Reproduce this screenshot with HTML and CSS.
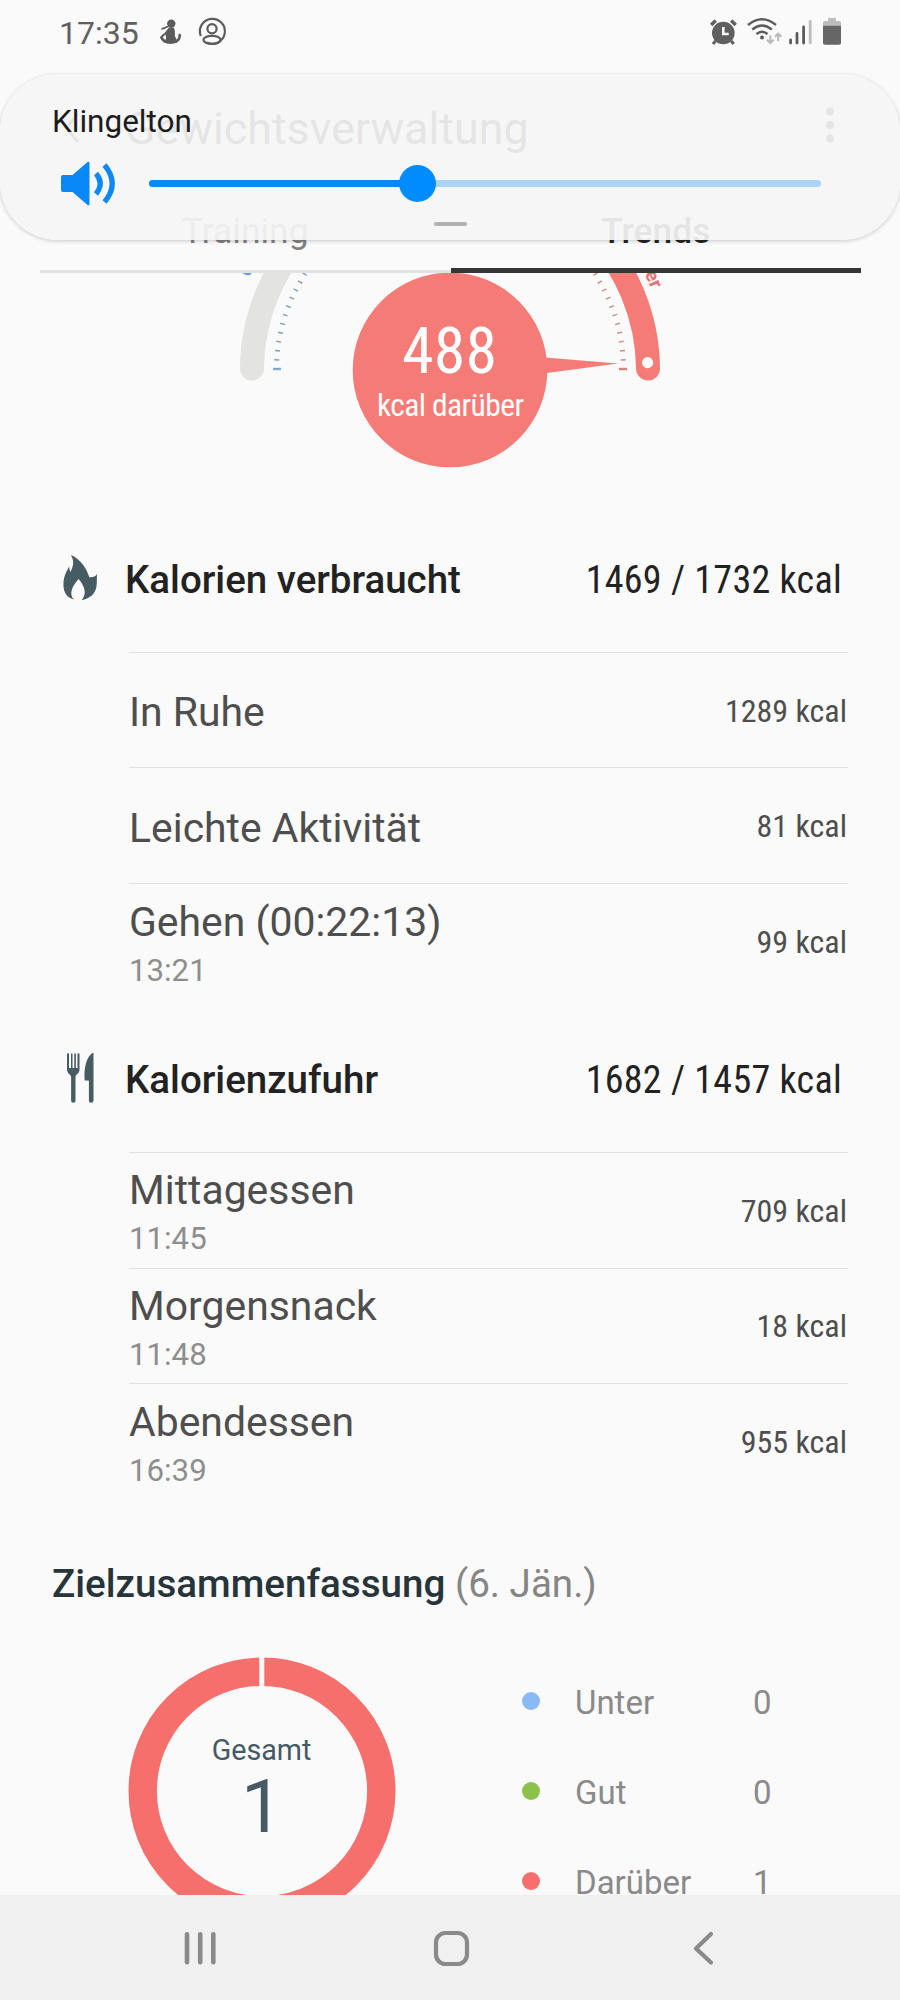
FILE: index.html
```html
<!DOCTYPE html>
<html lang="de">
<head>
<meta charset="utf-8">
<title>Gewichtsverwaltung</title>
<link rel="stylesheet" href="styles.css">
</head>
<body>
<div class="phone">
  <header class="status">
    <span class="clock">17:35</span>
    <svg class="status-left" viewBox="155 14 75 36" width="75" height="36">
      <g fill="#5c5c5c">
        <circle cx="171.3" cy="23.6" r="4.2"/>
        <path d="M168 26.5l-5.8 2.3" stroke="#5c5c5c" stroke-width="1.8" stroke-linecap="round"/>
        <path fill-rule="evenodd" d="M169 27.500h4.600c1.800 2.500 1.300 6 1.200 8.500 1 2.200 2.200 3.600 1.800 7h-11.500c-2.600-1.300-4.300-3.600-5.200-5.800 2-2.500 4.600-3.800 6.300-6.200zM165.500 34.600l-2.800 2.700 2.500 2.900c1.200-1.700 1.100-3.700.3-5.600z"/>
        <path d="M164.500 41c3 2.300 11 2.300 14-1.500 1.400-1.500 1.200-2.700 1.200-4.500" fill="none" stroke="#5c5c5c" stroke-width="2.600" stroke-linecap="round"/>
      </g>
      <g fill="none" stroke="#5c5c5c" stroke-width="2.200">
        <path d="M200.800 36A12.500 12.500 0 1 1 207 42.600"/>
        <circle cx="212" cy="28.700" r="4.600"/>
        <ellipse cx="212" cy="39.800" rx="8.600" ry="4"/>
      </g>
    </svg>
    <svg class="status-right" viewBox="706 14 140 36" width="140" height="36">
      <circle cx="723.300" cy="33" r="11.300" fill="#606060"/>
      <path d="M711.200 25l4.500-4.500M735.700 25l-4.500-4.500" stroke="#606060" stroke-width="3.400"/>
      <path d="M715.500 41l-2.500 3M731.200 41l2.500 3" stroke="#606060" stroke-width="3"/>
      <path d="M723.300 27v7h5.400" fill="none" stroke="#fafafa" stroke-width="2.600"/>
      <g fill="none" stroke="#5c5c5c" stroke-width="2.400">
        <path d="M748 25q14-11.500 28 0M752.200 29.500q9.800-8 19.600 0M756.500 34q5.500-4.500 11 0"/>
      </g>
      <circle cx="762" cy="37.500" r="2" fill="#5c5c5c"/>
      <path d="M770.300 35.500v7M767 39.800l3.300 3.200 3.300-3.200M778.200 41v-7M775 36.800l3.200-3.200 3.200 3.200" fill="none" stroke="#b9b9b9" stroke-width="2"/>
      <path d="M790.600 40v3M797 33.500v9.500M803.600 27v16" stroke="#5c5c5c" stroke-width="2.800" stroke-linecap="round"/>
      <path d="M810.200 21.300v21.700" stroke="#bdbdbd" stroke-width="2.800" stroke-linecap="round"/>
      <path d="M823 27v-4q0-2 2-2h3v-3h8v3h3q2 0 2 2v4z" fill="#bdbdbd"/>
      <path d="M823 25.700h18v17q0 2-2 2h-14q-2 0-2-2z" fill="#666"/>
    </svg>
  </header>

  <div class="titlebar">
    <svg viewBox="0 0 18 32" width="18" height="32"><path d="M15 2L3 16l12 14" fill="none" stroke="#252525" stroke-width="3"/></svg>
    <h1 class="title">Gewichtsverwaltung</h1>
    <svg class="more" viewBox="0 0 8 36" width="8" height="36"><g fill="#252525"><circle cx="4" cy="4.500" r="4"/><circle cx="4" cy="18" r="4"/><circle cx="4" cy="31.500" r="4"/></g></svg>
  </div>
  <nav class="tabs">
    <span class="tab">Training</span>
    <span class="tab tab-active">Trends</span>
  </nav>

  <main class="content">
    <svg class="gauge" viewBox="0 273 900 226" width="900" height="226">
      <defs>
        <path id="arcOver" d="M233 370A217 217 0 0 1 667 370"/>
        <path id="arcUnder" d="M229 370A221 221 0 0 1 671 370"/>
      </defs>
      <path d="M252 368.500A198 198 0 0 1 310 230" fill="none" stroke="#e3e3e1" stroke-width="24" stroke-linecap="round"/>
      <path d="M648 368.500A198 198 0 0 0 590 230" fill="none" stroke="#f57b76" stroke-width="24" stroke-linecap="round"/>
      <path d="M273 369h8" stroke="#7eaed3" stroke-width="2.400"/>
      <path d="M619 369h8" stroke="#e07b78" stroke-width="2.400"/>
      <path class="ticks-under" d="M276.500 369A173.500 173.500 0 0 1 300 282.250A173.500 173.500 0 0 1 320 253"/>
      <path class="ticks-over" d="M623.500 369A173.500 173.500 0 0 0 600 282.250A173.500 173.500 0 0 0 580 253"/>
      <text class="arc-label arc-over"><textPath href="#arcOver" startOffset="87.900%" text-anchor="end">Darüber</textPath></text>
      <text class="arc-label arc-under"><textPath href="#arcUnder" startOffset="13.700%">Unter</textPath></text>
      <circle cx="450" cy="370" r="97.300" fill="#f57b76"/>
      <path d="M545 357.600L618 363.500 545 373.300z" fill="#f57b76"/>
      <circle cx="647.600" cy="362.600" r="5.600" fill="#fff"/>
      <text class="gauge-num cond" x="449.500" y="373" textLength="95">488</text>
      <text class="gauge-unit cond" x="450.500" y="415.700" textLength="147">kcal darüber</text>
    </svg>

    <section class="group">
      <div class="group-head">
        <svg class="group-icon" viewBox="62 554 36 48" width="36" height="48">
          <path fill="#475b63" d="M70.800 555C80 558.500 86.500 568 89.300 577.200c3.700.3 6.300-.8 7.700-3.200-.3 4 .2 8-.6 13-1.200 7-7 12-14.900 13.200 4.500-5 5-12-3-21.200-6.200 7-10 15-4.600 20.600C66 597.500 63 591 63.500 583c.3-7 3-11.500 5.700-16.500.3 3 .4 4.300 1.300 5.200 3-5.500 4-11 .3-16.700z"/>
        </svg>
        <h2 class="group-title">Kalorien verbraucht</h2>
        <span class="group-total cond">1469 / 1732 kcal</span>
      </div>
      <ul class="rows">
        <li class="row"><div class="name">In Ruhe</div><span class="val cond">1289 kcal</span></li>
        <li class="row"><div class="name">Leichte Aktivität</div><span class="val cond">81 kcal</span></li>
        <li class="row"><div class="name">Gehen (00:22:13)<small class="time">13:21</small></div><span class="val cond">99 kcal</span></li>
      </ul>
    </section>

    <section class="group">
      <div class="group-head">
        <svg class="group-icon" viewBox="62 1054 36 50" width="36" height="50">
          <path fill="#475b63" d="M67 1054.500h2v14.500h2v-14.500h1.500v14.500h1.800v-14.500h1.600v14.500h1.600v-14.500h2v16c0 4-3.500 4.800-4 7v24q0 2.200-2.200 2.200t-2.200-2.200v-24c-.6-2.200-4.100-3-4.100-7zM93.500 1053.500v48q0 2.200-2.300 2.200t-2.300-2.200v-20h-4.200c-1.200-11.500 1.800-25 8.800-28z"/>
        </svg>
        <h2 class="group-title">Kalorienzufuhr</h2>
        <span class="group-total cond">1682 / 1457 kcal</span>
      </div>
      <ul class="rows">
        <li class="row"><div class="name">Mittagessen<small class="time">11:45</small></div><span class="val cond">709 kcal</span></li>
        <li class="row"><div class="name">Morgensnack<small class="time">11:48</small></div><span class="val cond">18 kcal</span></li>
        <li class="row"><div class="name">Abendessen<small class="time">16:39</small></div><span class="val cond">955 kcal</span></li>
      </ul>
    </section>

    <section class="summary">
      <h2 class="summary-title">Zielzusammenfassung <span class="summary-date">(6. Jän.)</span></h2>
      <div class="summary-body">
        <svg class="donut" viewBox="0 0 268 268" width="268" height="268">
          <circle cx="134" cy="134" r="119.300" fill="none" stroke="#f5706c" stroke-width="28.400"/>
          <rect x="131.300" y="0" width="5" height="30" fill="#fafafa"/>
          <text class="donut-label" x="133.500" y="103">Gesamt</text>
          <text class="donut-num" x="134" y="175.200">1</text>
        </svg>
        <ul class="legend">
          <li class="legend-row"><i class="dot dot-blue"></i><span class="legend-name">Unter</span><span>0</span></li>
          <li class="legend-row"><i class="dot dot-green"></i><span class="legend-name">Gut</span><span>0</span></li>
          <li class="legend-row"><i class="dot dot-red"></i><span class="legend-name">Darüber</span><span>1</span></li>
        </ul>
      </div>
    </section>
  </main>

  <footer class="navbar">
    <svg viewBox="0 1895 900 105" width="900" height="105" fill="none" stroke="#8a8a8a" stroke-linecap="round" stroke-linejoin="round">
      <path d="M187 1934.300v28M200.200 1934.300v28M213.300 1934.300v28" stroke-width="4.600"/>
      <rect x="436" y="1933" width="31" height="31" rx="9.500" stroke-width="4.200"/>
      <path d="M711 1934L696 1948.500 711 1962.500" stroke-width="4.200"/>
    </svg>
  </footer>

  <aside class="volume">
    <div class="volume-label">Klingelton</div>
    <div class="volume-row">
      <svg viewBox="60 161 56 45" width="56" height="45">
        <path fill="#0a88f5" d="M63 175h9.500L87.500 162q2-1 2 1v41q0 2-2 1L72.500 192H63q-2 0-2-2v-13q0-2 2-2z"/>
        <path d="M96 173.500q8.500 10 0 20.500M104.500 165q15.500 18.500 0 37" fill="none" stroke="#0a88f5" stroke-width="5.200"/>
      </svg>
      <div class="slider"><div class="slider-fill"></div><div class="slider-thumb"></div></div>
    </div>
    <div class="handle"></div>
  </aside>
</div>
</body>
</html>
```
FILE: styles.css
```css
* { box-sizing: border-box; }
body { margin: 0; background: #fafafa; font-family: Roboto, "Liberation Sans", sans-serif; }
h1, h2, ul { margin: 0; padding: 0; font-weight: 400; list-style: none; }
svg { display: block; flex: none; }
.cond { font-family: "Roboto Condensed", Roboto, sans-serif; font-stretch: 75%; }

.phone { position: relative; width: 900px; height: 2000px; display: flex; flex-direction: column; overflow: hidden; background: #fafafa; }

.status { height: 73px; display: flex; align-items: center; padding: 0 54px 9px 59px; color: #606060; }
.clock { font-size: 32px; width: 96px; padding-top: 2px; }
.status-right { margin-left: auto; }

.titlebar { height: 110px; display: flex; align-items: center; padding: 0 66.500px 0 63px; color: #252525; }
.title { flex: 1; font-size: 44.800px; margin-left: 44px; }
.more { margin-bottom: 7px; }

.tabs { height: 90px; display: flex; margin: 0 39px 0 40px; }
.tab { flex: 1; display: flex; align-items: center; justify-content: center; font-size: 35.400px; color: #808080; padding: 6px 0 0; box-shadow: inset 0 -3px #e2e2e2; }
.tab-active { font-weight: 500; color: #252525; box-shadow: inset 0 -5px #353537; }

.content { flex: 1; min-height: 0; overflow: hidden; }
.ticks-under, .ticks-over { fill: none; stroke-width: 5; stroke-dasharray: 1.400 7.700; stroke-dashoffset: -8.500; }
.ticks-under { stroke: #7f9fb5; }
.ticks-over { stroke: #c98d8b; }
.arc-label { font-size: 19px; font-weight: 700; }
.arc-over { fill: #e5736f; }
.arc-under { fill: #6f9fd8; }
.gauge-num, .gauge-unit { fill: #fff; text-anchor: middle; }
.gauge-num { font-size: 64px; }
.gauge-unit { font-size: 31.500px; }

.group-head { height: 152.700px; display: flex; align-items: center; padding: 5px 58px 0 62px; color: #222; }
.group-title { flex: 1; margin-left: 27px; padding-top: 4px; font-size: 38.500px; font-weight: 500; }
.group-total { font-size: 38px; padding-top: 4px; letter-spacing: .3px; }
.rows { margin: 0 52px 0 129px; }
.row { height: 115.800px; display: flex; align-items: center; justify-content: space-between; border-top: 1.500px solid #e0e0e0; padding: 4px 0 0; color: #4e4e4e; }
.name { font-size: 40.900px; line-height: 50px; }
.time { display: block; font-size: 31.200px; line-height: 40px; margin-top: 4px; color: #8e8e8e; }
.val { font-size: 32px; padding: 0 1px 3px 0; }

.summary-title { padding: 60px 0 0 52px; font-size: 38.600px; line-height: 50px; font-weight: 500; color: #27353b; }
.summary-date { font-weight: 400; color: #858585; }
.summary-body { display: flex; padding: 47.500px 0 0 128px; }
.legend { margin-left: 126px; }
.legend-row { height: 90px; display: flex; align-items: center; padding-top: 1px; font-size: 33px; color: #8a8a8a; }
.legend-name { width: 178px; }
.dot { width: 18px; height: 18px; border-radius: 50%; margin: 0 35px 3px 0; }
.dot-blue { background: #8abaf6; }
.dot-green { background: #8bc34a; }
.dot-red { background: #f5706c; }
.donut-label, .donut-num { fill: #455a64; text-anchor: middle; }
.donut-label { font-size: 28.700px; }
.donut-num { font-size: 74.500px; }

.navbar { flex: none; height: 105px; background: #f0f0f0; }

.volume { position: absolute; top: 74px; left: 0; width: 900px; height: 166px; border-radius: 58px; background: rgba(245, 245, 245, .92); box-shadow: 0 1px 4px rgba(0, 0, 0, .2); }
.volume-label { padding: 28px 0 0 52px; font-size: 31.500px; line-height: 40px; color: #1c1c1c; }
.volume-row { display: flex; align-items: center; gap: 33px; padding: 19px 79px 0 60px; }
.slider { flex: 1; height: 7px; border-radius: 4px; background: #aad3f5; display: flex; align-items: center; }
.slider-fill { width: 255px; height: 7px; border-radius: 4px; background: #0a88f5; }
.slider-thumb { width: 37px; height: 37px; border-radius: 50%; background: #008cff; margin-left: -5px; }
.handle { width: 33px; height: 4px; border-radius: 2px; background: #b2b2b2; margin: 16px auto 0; }
```
